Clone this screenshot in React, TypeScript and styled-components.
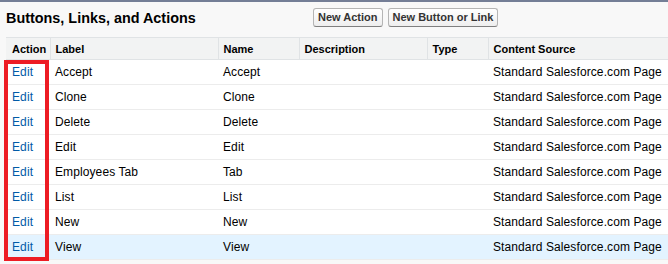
import * as React from "react";
import styled, { createGlobalStyle } from "styled-components";

// // // //

const GlobalStyle = createGlobalStyle`
    html, body {
        margin: 0;
        padding: 0;
        background: #f8f8f8;
        overflow: hidden;
    }
    body {
        font-family: "Liberation Sans", Arial, sans-serif;
        color: #000;
    }
`;

const Panel = styled.div`
    width: 668px;
    height: 264px;
    box-sizing: border-box;
    overflow: hidden;
    background: #f8f8f8;
    border-top: 2px solid #747e96;
    padding: 0 0 0 6px;
`;

const PanelHeader = styled.div`
    display: flex;
    align-items: center;
    height: 35px;
`;

const Title = styled.h3`
    margin: 0;
    width: 307px;
    font-size: 14.4px;
    font-weight: bold;
    color: #000;
    padding-bottom: 3px;
`;

const ButtonRow = styled.div`
    display: flex;
    gap: 5px;
    padding-bottom: 4px;
`;

const Button = styled.button`
    font-family: "Liberation Sans", Arial, sans-serif;
    font-size: 11px;
    font-weight: bold;
    color: #333;
    height: 19px;
    padding: 0 4px;
    border: 1px solid #b5b5b5;
    border-bottom-color: #7f7f7f;
    border-radius: 3px;
    background: linear-gradient(#ffffff, #eeeeee);
    line-height: 17px;
`;

const TableWrap = styled.div`
    position: relative;
`;

const Table = styled.table`
    border-collapse: collapse;
    background: #fff;
    border-top: 1px solid #e0e3e5;
    table-layout: fixed;
    width: 662px;
`;

const HeadCell = styled.th<{ $w: number }>`
    width: ${(p) => p.$w}px;
    height: 22px;
    box-sizing: border-box;
    padding: 0 5px;
    text-align: left;
    font-size: 11px;
    font-weight: bold;
    color: #000;
    background: #f2f3f3;
    border-bottom: 1px solid #e0e3e5;
    border-left: 1px solid #e0e3e5;
    white-space: nowrap;

    &:first-child {
        border-left: none;
        padding-left: 6px;
    }
`;

const Row = styled.tr<{ $highlight?: boolean }>`
    background: ${(p) => (p.$highlight ? "#e3f3ff" : "#fff")};
`;

const Cell = styled.td`
    height: 24px;
    padding: 0 5px;
    font-size: 12px;
    letter-spacing: 0.1px;
    color: #000;
    border-bottom: 1px solid #ececec;
    white-space: nowrap;
    overflow: hidden;

    &:first-child {
        padding-left: 6px;
    }
`;

const EditLink = styled.a`
    color: #015ba7;
    text-decoration: none;
    cursor: pointer;
`;

// Annotation drawn over the Action column
const Highlight = styled.div`
    position: absolute;
    left: -2px;
    top: 23px;
    width: 45px;
    height: 201px;
    box-sizing: border-box;
    border: 4px solid #ed1c24;
    pointer-events: none;
`;

const columns = [
    { label: "Action", width: 44 },
    { label: "Label", width: 168 },
    { label: "Name", width: 81 },
    { label: "Description", width: 128 },
    { label: "Type", width: 61 },
    { label: "Content Source", width: 180 },
];

const rows = [
    { label: "Accept", name: "Accept" },
    { label: "Clone", name: "Clone" },
    { label: "Delete", name: "Delete" },
    { label: "Edit", name: "Edit" },
    { label: "Employees Tab", name: "Tab" },
    { label: "List", name: "List" },
    { label: "New", name: "New" },
    { label: "View", name: "View" },
];

export default function App() {
    return (
        <>
            <GlobalStyle />
            <Panel>
                <PanelHeader>
                    <Title>Buttons, Links, and Actions</Title>
                    <ButtonRow>
                        <Button>New Action</Button>
                        <Button>New Button or Link</Button>
                    </ButtonRow>
                </PanelHeader>
                <TableWrap>
                    <Table>
                        <thead>
                            <tr>
                                {columns.map((c) => (
                                    <HeadCell key={c.label} $w={c.width}>
                                        {c.label}
                                    </HeadCell>
                                ))}
                            </tr>
                        </thead>
                        <tbody>
                            {rows.map((r, i) => (
                                <Row
                                    key={r.label}
                                    $highlight={i === rows.length - 1}
                                >
                                    <Cell>
                                        <EditLink>Edit</EditLink>
                                    </Cell>
                                    <Cell>{r.label}</Cell>
                                    <Cell>{r.name}</Cell>
                                    <Cell />
                                    <Cell />
                                    <Cell>Standard Salesforce.com Page</Cell>
                                </Row>
                            ))}
                        </tbody>
                    </Table>
                    <Highlight />
                </TableWrap>
            </Panel>
        </>
    );
}
